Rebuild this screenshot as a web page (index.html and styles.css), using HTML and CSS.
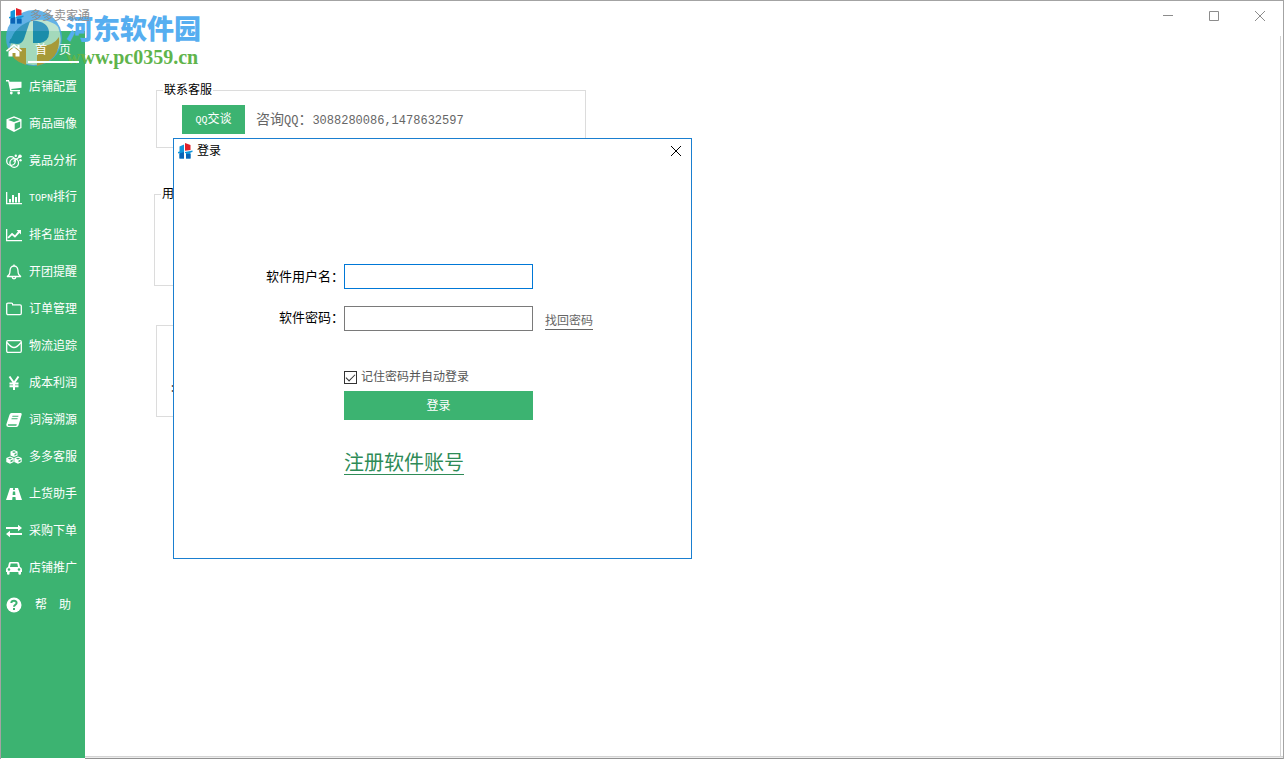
FILE: index.html
```html
<!DOCTYPE html>
<html lang="zh-CN">
<head>
<meta charset="utf-8">
<title>多多卖家通</title>
<link rel="stylesheet" href="styles.css">
</head>
<body>
<svg width="0" height="0" class="defs" aria-hidden="true">
  <symbol id="logo" viewBox="0 0 16 16">
    <path fill="#1296db" d="M1.500 3.500L6 1.500v14H1.500V10L0 10.500V9l1.500-.5z"/>
    <path fill="#0b63b5" d="M1.500 10.500L6 9v6.500H1.500z"/>
    <path fill="#e0202a" d="M7 0l5.500 2v5L7 7.800z"/>
    <path fill="#1296db" d="M7 9l7.500-1.500V9L12.500 9.500v6H8V10l-1 .3z"/>
    <path fill="#0b63b5" d="M8 11h4.500v4.500H8z"/>
  </symbol>
</svg>
<div class="window">
  <header class="titlebar">
    <svg class="app-logo"><use href="#logo"/></svg>
    <h1 class="app-title">多多卖家通</h1>
    <div class="controls">
      <button aria-label="最小化"><svg viewBox="0 0 12 12"><path d="M1 5.500h10"/></svg></button>
      <button aria-label="最大化"><svg viewBox="0 0 12 12"><path d="M1.500 1.500h9v9h-9z"/></svg></button>
      <button aria-label="关闭"><svg viewBox="0 0 12 12"><path d="M1 1l10 10M11 1L1 11"/></svg></button>
    </div>
  </header>
  <div class="body">
    <nav class="sidebar">
      <a href="#" class="item active"><svg viewBox="0 0 16 16"><path class="f" d="M8 2L0 8.500l1 1.200L8 4l7 5.700 1-1.200-2.500-2V3h-2v2zM2.500 9.600V14.500h4V11h3v3.500h4V9.600L8 5.200z"/></svg><span>首　页</span></a>
      <a href="#" class="item"><svg viewBox="0 0 16 16"><path class="f" d="M0 1h3l.6 1.800H15.500v6L5.200 10l.3 1H14v1.300H4.200L2.200 2.400H0z"/><circle class="f" cx="5.300" cy="14" r="1.400"/><circle class="f" cx="12.700" cy="14" r="1.400"/></svg><span>店铺配置</span></a>
      <a href="#" class="item"><svg viewBox="0 0 16 16"><path class="f" fill-rule="evenodd" d="M8 .3l7.500 2.900v8.800L8 15.900.5 12V3.200zM8 1.700L2.200 3.900 8 6.100l5.800-2.200zM8.700 7.500v6.500l5.500-2.800V5.400z"/></svg><span>商品画像</span></a>
      <a href="#" class="item"><svg viewBox="0 0 16 16"><g class="s"><circle cx="5" cy="8" r="4.300"/><circle cx="8.200" cy="10" r="4.300"/><path d="M7.500 8.500l6.500-5"/></g><circle class="f" cx="14" cy="3.300" r="1.800"/><circle class="f" cx="9.800" cy="2.800" r="1.200"/><circle class="f" cx="14.500" cy="7.300" r="1.200"/></svg><span>竟品分析</span></a>
      <a href="#" class="item"><svg viewBox="0 0 16 16"><path class="f" d="M0 2h1.300v11h14.700v1.300H0zM3 9h2v3.500H3zM6 5h2v7.500H6zM9 7h2v5.500H9zM12 3h2v9.500h-2z"/></svg><span><span class="ascii">TOPN</span>排行</span></a>
      <a href="#" class="item"><svg viewBox="0 0 16 16"><path class="f" d="M0 2h1.300v11h14.700v1.300H0zM10.500 3H15v4.500l-1.500-1.500L9 10.700l-3-2.500-3.300 3.300-1.200-1.200L6 5.800l3 2.500 3-3.800z"/></svg><span>排名监控</span></a>
      <a href="#" class="item"><svg viewBox="0 0 16 16"><path class="s" d="M8 2C5 2 4 4.500 4 7c0 3-1 4.500-3 5.500h14c-2-1-3-2.500-3-5.500 0-2.500-1-5-4-5z"/><path class="s" d="M8 .5V2M6.200 13c0 2.300 3.600 2.300 3.600 0"/></svg><span>开团提醒</span></a>
      <a href="#" class="item"><svg viewBox="0 0 16 16"><path class="s" d="M.7 3.500q0-1.300 1.300-1.300h3.500q1.200 0 1.200 1.600H14q1.300 0 1.300 1.300v7.200q0 1.300-1.300 1.300H2q-1.300 0-1.300-1.300z"/></svg><span>订单管理</span></a>
      <a href="#" class="item"><svg viewBox="0 0 16 16"><rect class="s" x=".7" y="2.700" width="14.600" height="11.600" rx="1.200"/><path class="s" d="M1 4.500c2 2.500 5 5 7 5s5-2.500 7-5"/></svg><span>物流追踪</span></a>
      <a href="#" class="item"><svg viewBox="0 0 16 16"><path class="b" d="M3.500 1.500L8 8l4.500-6.500M8 7.500V15M3.500 8.500h9M3.500 11.300h9"/></svg><span>成本利润</span></a>
      <a href="#" class="item"><svg viewBox="0 0 16 16"><path class="f" fill-rule="evenodd" d="M5.500 1H15q1 .5.700 1.500l-3.200 10.700Q12 15 10.500 15H2.200Q0 14.600.3 12.500L3.500 2.800Q4 1 5.500 1zM6.500 3.700l-.3 1h6l.3-1zM5.700 6.200l-.3 1h6l.3-1zM2 12.200q-.5 1.500.8 1.500h7.500l.5-1.500z"/></svg><span>词海溯源</span></a>
      <a href="#" class="item"><svg viewBox="0 0 16 16"><path class="f" fill-rule="evenodd" d="M8 1l3.500 1.500v4L8 8 4.500 6.500v-4zM8 2.200l-2.100.9L8 4l2.100-.9zM8.500 5v1.700l2-.9V4zM4 7.500L7.700 9v4L4 14.700.3 13V9zM4 8.700l-2.200.9 2.200.9 2.200-.9zM4.500 11.500v1.800l2.200-1v-1.700zM12 7.500L15.700 9v4L12 14.700 8.300 13V9zM12 8.700l-2.200.9 2.200.9 2.200-.9zM12.500 11.500v1.800l2.200-1v-1.700z"/></svg><span>多多客服</span></a>
      <a href="#" class="item"><svg viewBox="0 0 16 16"><path class="f" fill-rule="evenodd" d="M4 2h3.200L7 4h2l-.2-2H12l4 12H9.800l-.3-3h-3l-.3 3H0zM6.900 5.500l-.3 3.500h2.800l-.3-3.500z"/></svg><span>上货助手</span></a>
      <a href="#" class="item"><svg viewBox="0 0 16 16"><path class="f" d="M0 4h12V1.800L16 5l-4 3.200V6H0zM16 10H4V7.800L0 11l4 3.200V12h12z"/></svg><span>采购下单</span></a>
      <a href="#" class="item"><svg viewBox="0 0 16 16"><path class="f" fill-rule="evenodd" d="M4.500 2h7q1.300 0 1.700 1.400L14 7q2 .5 2 2.500V12h-1v1.500q0 1.300-1.300 1.300t-1.300-1.300V12H3.600v1.500q0 1.300-1.300 1.300T1 13.500V12H0V9.500Q0 7.500 2 7l.8-3.600Q3.200 2 4.500 2zM4.700 3.500L4 7h8l-.7-3.500zM3 8.200a1.300 1.300 0 100 2.600 1.300 1.300 0 000-2.600zM13 8.200a1.300 1.300 0 100 2.600 1.300 1.300 0 000-2.600z"/></svg><span>店铺推广</span></a>
      <a href="#" class="item"><svg viewBox="0 0 16 16"><circle class="f" cx="8" cy="8" r="7.500"/><path class="q" d="M5.300 6C5.500 3.200 10.600 3 10.600 6c0 1.800-2.600 1.800-2.600 3.800M8 11v2"/></svg><span>帮　助</span></a>
    </nav>
    <main class="content">
      <fieldset class="group contact">
        <legend>联系客服</legend>
        <div class="contact-row">
          <button class="primary chat"><span class="ascii">QQ</span>交谈</button>
          <p class="qq">咨询<span class="num">QQ</span>：<span class="num">3088280086,1478632597</span></p>
        </div>
      </fieldset>
      <fieldset class="group user">
        <legend>用</legend>
      </fieldset>
      <fieldset class="group more">
        <p class="num">:</p>
      </fieldset>
    </main>
  </div>
  <footer class="edge"></footer>
</div>

<section class="dialog" role="dialog" aria-labelledby="login-title">
  <header class="dialog-head">
    <svg class="app-logo"><use href="#logo"/></svg>
    <h2 id="login-title">登录</h2>
    <button class="close" aria-label="关闭"><svg viewBox="0 0 12 12"><path d="M1 1l10 10M11 1L1 11"/></svg></button>
  </header>
  <form class="login">
    <label for="user">软件用户名：</label>
    <input id="user" class="box focused" type="text">
    <label for="pass" class="second">软件密码：</label>
    <input id="pass" class="box second" type="password">
    <a href="#" class="find second">找回密码</a>
    <label class="remember"><input type="checkbox" checked>记住密码并自动登录</label>
    <button type="button" class="primary submit">登录</button>
    <a href="#" class="register">注册软件账号</a>
  </form>
</section>

<div class="watermark">
  <svg viewBox="0 0 60 60">
    <circle cx="30" cy="29" r="28" fill="#4aa5e3"/>
    <path fill="#b5e0c8" d="M6 38Q10 20 28 12q18-5 26 6 6 14-1 24-9 14-24 14Q9 54 6 38z"/>
    <path fill="#1687b5" d="M5 34Q9 19 26 12L20 30q-2 5-7 5zM29 12h4q12 2 12 12 0 8-9 10h-7z"/>
    <path fill="#b99630" d="M4 39h18v17Q8 52 4 39zM33 37q16 1 22-9 2 23-22 29z"/>
    <path fill="#4aa5e3" d="M3 30Q10 6 34 3q15 1 21 15Q42 8 25 11 12 17 7 30z"/>
  </svg>
  <div class="mark-text"><strong>河东软件园</strong><em>www.pc0359.cn</em></div>
</div>
</body>
</html>
```

FILE: styles.css
```css
* { box-sizing: border-box; }
body {
  margin: 0;
  position: relative;
  font: 12px/16px "Liberation Sans", "Noto Sans CJK SC", sans-serif;
  color: #000;
  background: #fff;
}
.defs { position: absolute; }
h1, h2, p { margin: 0; font-size: 12px; font-weight: 400; }
button { font: inherit; border: 0; padding: 0; background: none; }
.ascii { font-family: "Liberation Mono", monospace; font-size: 10px; }
.num { font-family: "Liberation Mono", monospace; font-size: 12px; }

.window {
  min-height: 100vh;
  display: flex;
  flex-direction: column;
  border: 1px solid #a3a3a3;
  border-bottom: 0;
}
.titlebar { height: 30px; display: flex; align-items: center; padding-left: 8px; }
.titlebar > .app-logo,
.app-title,
.active > svg,
.active > span { position: relative; z-index: 2; }
.app-logo { width: 16px; height: 16px; flex: none; }
.app-title { margin-left: 5px; color: #8e8e8e; }
.controls { margin-left: auto; display: flex; }
.controls button { width: 46px; height: 28px; display: grid; place-items: center; }
.controls svg, .close svg { width: 12px; height: 12px; fill: none; stroke: #8c8c8c; }

.body { flex: 1; display: flex; }
.sidebar { width: 84px; margin-bottom: -2px; background: #3cb371; }
.item {
  height: 37px;
  display: flex;
  align-items: center;
  position: relative;
  padding-left: 5px;
  color: #fff;
  text-decoration: none;
}
.item svg { width: 16px; height: 16px; flex: none; }
.item > span { width: 48px; margin-left: 7px; text-align: center; white-space: nowrap; }
.active::after {
  content: "";
  position: absolute;
  z-index: 2;
  left: 27px;
  bottom: 5px;
  width: 51px;
  height: 2px;
  background: #fff;
}
.f { fill: #fff; }
.s { fill: none; stroke: #fff; stroke-width: 1.3; }
.b { fill: none; stroke: #fff; stroke-width: 2; }
.q { fill: none; stroke: #3cb371; stroke-width: 2; }

.content {
  flex: 1;
  margin-top: 5px;
  padding: 46px 0 0 69px;
  border-right: 1px solid #d4d4d4;
  margin-right: 2px;
}
.group { width: 430px; margin: 0 0 0 2px; padding: 0; border: 1px solid #dcdcdc; }
.group legend { margin-left: 6px; padding: 0 1px; }
.contact { height: 66px; }
.contact legend { height: 16px; }
.contact-row { display: flex; align-items: center; gap: 11px; padding: 7px 0 0 25px; }
.contact .qq { font-size: 14px; color: #666; }
.primary { background: #3cb371; color: #fff; }
.chat { width: 63px; height: 29px; }
.user { height: 100px; margin: 38px 0 0; }
.more { height: 92px; margin-top: 39px; padding: 55px 0 0 12px; color: #555; }
.edge {
  height: 3px;
  margin-left: 84px;
  border-top: 1px solid #d4d4d4;
  border-bottom: 1px solid #929292;
  background: #ececec;
}

.dialog {
  position: absolute;
  left: 173px;
  top: 138px;
  width: 519px;
  min-height: 421px;
  border: 1px solid #1a7fd0;
  background: #fff;
}
.dialog-head { height: 24px; display: flex; align-items: center; padding-left: 4px; }
.dialog-head h2 { margin-left: 3px; }
.close { margin-left: auto; width: 30px; height: 24px; display: grid; place-items: center; }
.close svg { stroke: #000; }
.login {
  display: grid;
  grid-template-columns: 170px 189px auto;
  grid-template-rows: 25px 42px 59px 31px auto;
  padding-top: 101px;
  align-items: center;
}
.login > label { grid-column: 1; text-align: right; font-size: 13px; }
.login > .second { align-self: end; }
.login > label.second { margin-bottom: 5px; }
.box { grid-column: 2; width: 100%; height: 25px; border: 1px solid #7a7a7a; padding: 2px 4px; font: inherit; outline: 0; }
.focused { border-color: #0078d7; }
.find {
  justify-self: start;
  margin: 0 0 1px 12px;
  color: #666;
  border-bottom: 1px solid #666;
  text-decoration: none;
}
.login > .remember {
  grid-column: 2 / 4;
  justify-self: start;
  align-self: end;
  display: flex;
  align-items: center;
  gap: 4px;
  margin-bottom: 5px;
  font-size: 12px;
  color: #555;
}
.remember input {
  appearance: none;
  width: 13px;
  height: 13px;
  margin: 0;
  border: 1px solid #333;
  display: grid;
  place-items: center;
}
.remember input:checked::before {
  content: "";
  width: 8px;
  height: 4px;
  margin-bottom: 2px;
  border-left: 1px solid #333;
  border-bottom: 1px solid #333;
  transform: rotate(-45deg);
}
.submit { grid-column: 2; height: 29px; }
.register {
  grid-column: 2;
  justify-self: start;
  margin-top: 32px;
  font-size: 20px;
  line-height: 21px;
  color: #2e8b57;
  border-bottom: 1px solid #2e8b57;
  text-decoration: none;
}

.watermark { position: absolute; z-index: 1; left: 4px; top: 9px; display: flex; pointer-events: none; }
.watermark svg { width: 60px; height: 60px; opacity: .85; }
.mark-text { display: flex; flex-direction: column; padding: 4px 0 0 2px; }
.mark-text strong { font-size: 27px; line-height: 34px; font-weight: 900; color: #56aef0; }
.mark-text em { font: bold 20px/20px "Liberation Serif", serif; color: #60b44b; }
```
